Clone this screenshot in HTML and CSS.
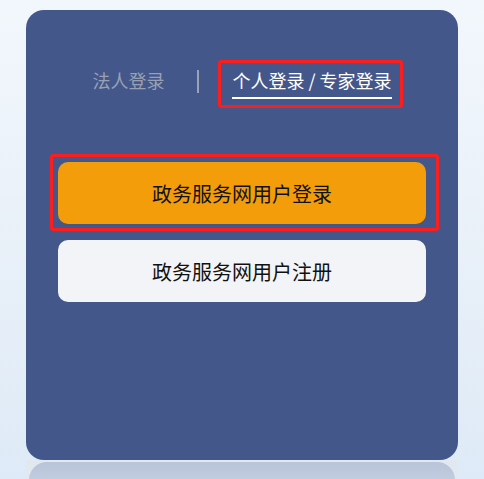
FILE: index.html
```html
<!DOCTYPE html>
<html lang="zh-CN">
<head>
<meta charset="utf-8">
<title>登录</title>
<link rel="stylesheet" href="styles.css">
</head>
<body>
<div class="card">
  <div class="tabs">
    <span class="tab">法人登录</span>
    <span class="sep"></span>
    <span class="tab active">个人登录 / 专家登录</span>
  </div>
  <div class="actions">
    <button class="btn btn-login">政务服务网用户登录</button>
    <button class="btn btn-register">政务服务网用户注册</button>
  </div>
  <div class="mark mark-tab"></div>
  <div class="mark mark-btn"></div>
</div>
<div class="reflect"><div class="reflect-inner"></div></div>
</body>
</html>
```
FILE: styles.css
```css
html, body {
  margin: 0;
  padding: 0;
}
body {
  width: 484px;
  height: 479px;
  overflow: hidden;
  background: linear-gradient(180deg, #f2f7fc 0%, #e7eff8 60%, #deeaf7 100%);
  font-family: "Noto Sans CJK SC", "Noto Sans", sans-serif;
}
.card {
  position: relative;
  box-sizing: border-box;
  margin: 10px 0 0 26px;
  width: 432px;
  height: 450px;
  border-radius: 18px;
  background: #44578b;
  padding-top: 58px;
}
.tabs {
  display: flex;
  justify-content: center;
  align-items: flex-start;
  gap: 33px;
}
.tab {
  font-size: 18px;
  line-height: 24px;
  color: #98a1b3;
  padding-bottom: 5px;
  border-bottom: 2px solid transparent;
  white-space: nowrap;
}
.tab.active {
  color: #ffffff;
  border-bottom-color: #ffffff;
}
.sep {
  width: 2px;
  height: 23px;
  margin-top: 2px;
  background: #9aa3b5;
}
.actions {
  display: flex;
  flex-direction: column;
  gap: 16px;
  margin: 63px 32px 0;
}
.btn {
  display: block;
  width: 100%;
  height: 62px;
  border: 0;
  border-radius: 10px;
  font-family: inherit;
  font-size: 20px;
  color: #111111;
  padding: 0;
}
.btn-login {
  background: #f49d0a;
}
.btn-register {
  background: #f2f4f7;
}
.mark {
  position: absolute;
  box-sizing: border-box;
  border: 3px solid #fb1e1e;
  border-radius: 3px;
}
.mark-tab {
  left: 192px;
  top: 50px;
  width: 185px;
  height: 48px;
}
.mark-btn {
  left: 24px;
  top: 144px;
  width: 389px;
  height: 77px;
}
.reflect {
  margin-left: 26px;
  width: 432px;
  height: 19px;
  padding-top: 2px;
  box-sizing: border-box;
  background: #e2e8f0;
}
.reflect-inner {
  margin: 0 3px;
  height: 40px;
  border-radius: 18px 18px 0 0;
  background: linear-gradient(180deg, #b8c4d9 0%, #cbd6e6 100%);
}
```
